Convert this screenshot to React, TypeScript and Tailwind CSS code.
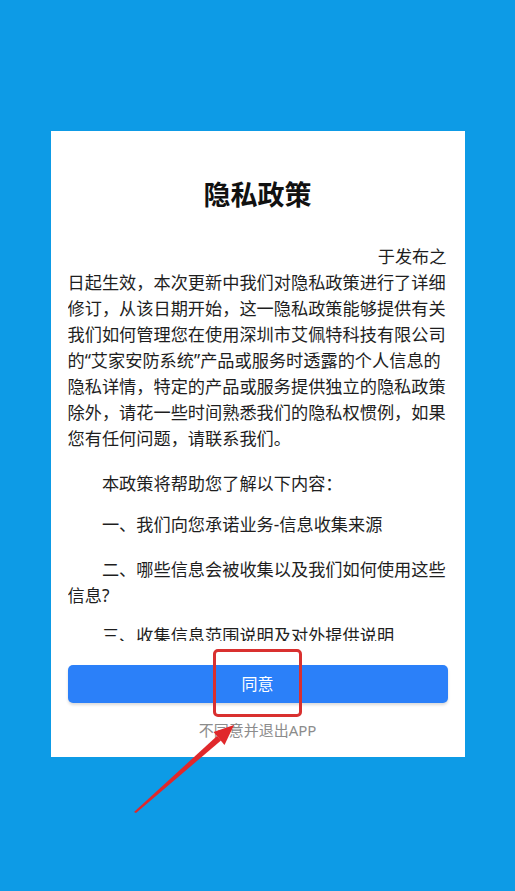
const lines = [
  '日起生效，本次更新中我们对隐私政策进行了详细',
  '修订，从该日期开始，这一隐私政策能够提供有关',
  '我们如何管理您在使用深圳市艾佩特科技有限公司',
  '的“艾家安防系统”产品或服务时透露的个人信息的',
  '隐私详情，特定的产品或服务提供独立的隐私政策',
  '除外，请花一些时间熟悉我们的隐私权惯例，如果',
  '您有任何问题，请联系我们。',
];

function Arrow() {
  // tail (135,812) -> tip (234,725)
  return (
    <svg className="absolute left-0 top-0 pointer-events-none" width="515" height="891" viewBox="0 0 515 891">
      <polygon points="134,812 136,813 221,740.5 217,736" fill="#e0282b" />
      <polygon points="234,725 213.5,732 224.5,745" fill="#e0282b" />
    </svg>
  );
}

export default function App() {
  return (
    <div
      className="relative flex min-h-screen w-full justify-center bg-[#0d9be6] pt-[131px]"
      style={{ fontFamily: '"Noto Sans", "Noto Sans CJK SC", sans-serif' }}
    >
      <div className="flex h-[626px] w-[414px] flex-col bg-white px-[17px] pt-[46px] pb-[17px]">
        <h1 className="text-center text-[27px] font-bold leading-[36px] text-[#111]">隐私政策</h1>

        <div className="mt-[31px] h-[397px] overflow-hidden text-[17.2px] leading-[26px] text-[#1e1e1e]">
          <div>
            <div className="text-right pr-[1px]">于发布之</div>
            {lines.map((l) => (
              <div key={l} className="whitespace-nowrap">{l}</div>
            ))}
          </div>
          <p className="mt-[19px] indent-[2em]">本政策将帮助您了解以下内容：</p>
          <p className="mt-[15px] indent-[2em]">一、我们向您承诺业务-信息收集来源</p>
          <p className="mt-[19px] indent-[2em]">二、哪些信息会被收集以及我们如何使用这些信息?</p>
          <p className="mt-[14px] indent-[2em]">三、收集信息范围说明及对外提供说明</p>
        </div>

        <button className="mt-[24px] h-[38px] w-full rounded-[5px] bg-[#2b80f9] text-[16px] text-white shadow-[0_2px_3px_rgba(0,0,0,0.15)]">
          同意
        </button>
        <div className="mt-[17px] text-center text-[15px] leading-[20px] text-[#8c8c8c]">不同意并退出APP</div>
      </div>

      {/* annotation */}
      <div className="absolute left-[213px] top-[649px] h-[68px] w-[89px] rounded-[5px] border-[3px] border-[#d9302f]" />
      <Arrow />
    </div>
  );
}
